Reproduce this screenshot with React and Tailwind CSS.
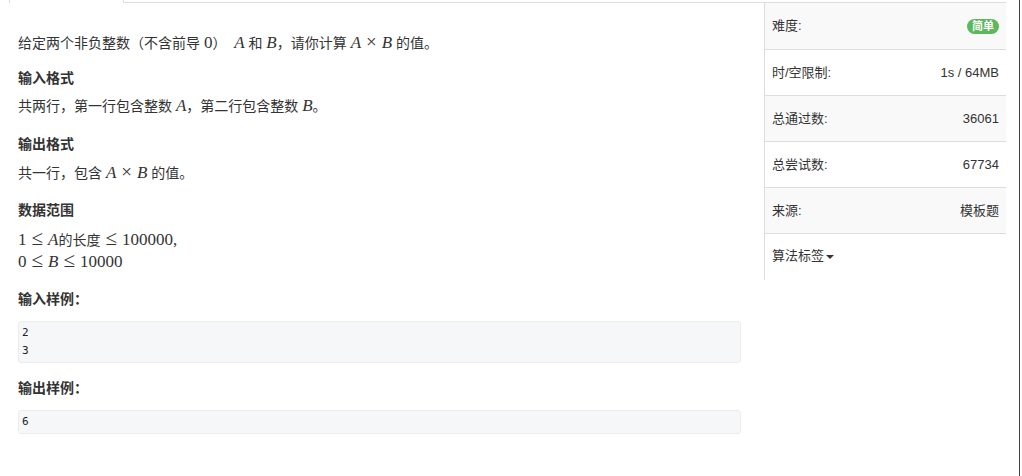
const stats = [
  { label: "难度:", badge: "简单", shade: true },
  { label: "时/空限制:", value: "1s / 64MB" },
  { label: "总通过数:", value: "36061", shade: true },
  { label: "总尝试数:", value: "67734" },
  { label: "来源:", value: "模板题", shade: true },
];

function M({ children }) {
  return <span className="font-['Liberation_Serif',serif] italic text-[17px]">{children}</span>;
}

function N({ children }) {
  return <span className="font-['Liberation_Serif',serif] text-[17px]">{children}</span>;
}

function Rel({ children }) {
  return (
    <span className="mx-[5px] font-['Liberation_Serif',serif] text-[21px] leading-none">{children}</span>
  );
}

function Times() {
  return (
    <span className="mx-[5px] font-['Liberation_Serif',serif] text-[19px] leading-none">×</span>
  );
}

function Sample({ lines }) {
  return (
    <pre className="rounded-[3px] border border-[#ececec] bg-[#f6f7f9] py-[2px] pl-[3px] font-['DejaVu_Sans_Mono',monospace] text-[11px] leading-[18px] text-[#222]">
      {lines.join("\n")}
    </pre>
  );
}

function App() {
  return (
    <div className="flex h-[476px] w-[1022px] overflow-hidden bg-white font-['Liberation_Sans','Noto_Sans_CJK_SC',sans-serif] text-[#333]">
      <div className="flex w-[1019px] flex-col">
        <div className="flex h-[3px]">
          <div className="w-[9px]" />
          <div className="w-[115px] border-x border-[#ddd]" />
          <div className="w-[882px] border-b border-[#ddd]" />
        </div>

        <div className="flex">
          <div className="w-[764px] pl-[18px] pr-[23px] pt-[29px] text-[14px] leading-[20px]">
            <p className="h-[20px]">
              给定两个非负整数（不含前导 <N>0</N>）&nbsp; <M>A</M> 和 <M>B</M>，请你计算 <M>A</M>
              <Times />
              <M>B</M> 的值。
            </p>

            <h4 className="mt-[16px] font-bold">输入格式</h4>
            <p className="mt-[8px] h-[20px]">
              共两行，第一行包含整数 <M>A</M>，第二行包含整数 <M>B</M>。
            </p>

            <h4 className="mt-[18px] font-bold">输出格式</h4>
            <p className="mt-[8px] h-[20px]">
              共一行，包含 <M>A</M>
              <Times />
              <M>B</M> 的值。
            </p>

            <h4 className="mt-[18px] font-bold">数据范围</h4>
            <div className="mt-[8px] leading-[22px]">
              <div className="h-[22px]">
                <N>1</N>
                <Rel>≤</Rel>
                <M>A</M>
                <span>的长度</span>
                <Rel>≤</Rel>
                <N>100000,</N>
              </div>
              <div className="h-[22px]">
                <N>0</N>
                <Rel>≤</Rel>
                <M>B</M>
                <Rel>≤</Rel>
                <N>10000</N>
              </div>
            </div>

            <h4 className="mt-[17px] font-bold">输入样例：</h4>
            <div className="mt-[12px]">
              <Sample lines={["2", "3"]} />
            </div>

            <h4 className="mt-[15px] font-bold">输出样例：</h4>
            <div className="mt-[12px]">
              <Sample lines={["6"]} />
            </div>
          </div>

          <div className="h-[277px] w-[242px] border-l border-[#ddd] text-[13px]">
            {stats.map((row, i) => (
              <div
                key={row.label}
                className={`flex items-center justify-between border-b border-[#ddd] pl-[7px] pr-[7px] ${
                  i === 0 ? "h-[47px]" : "h-[46px]"
                } ${row.shade ? "bg-[#f9f9f9]" : "bg-white"}`}
              >
                <span>{row.label}</span>
                {row.badge ? (
                  <span className="rounded-full bg-[#5cb85c] px-[5px] text-[11px] font-bold leading-[15px] text-white">
                    {row.badge}
                  </span>
                ) : (
                  <span>{row.value}</span>
                )}
              </div>
            ))}
            <div className="flex h-[44px] items-center pl-[7px]">
              算法标签
              <span className="ml-[2px] mt-[1px] h-0 w-0 border-x-[4px] border-t-[4px] border-x-transparent border-t-[#333]" />
            </div>
          </div>
        </div>
      </div>
      <div className="h-full w-px bg-[#444]" />
      <div className="w-[2px]" />
    </div>
  );
}

export default App;
